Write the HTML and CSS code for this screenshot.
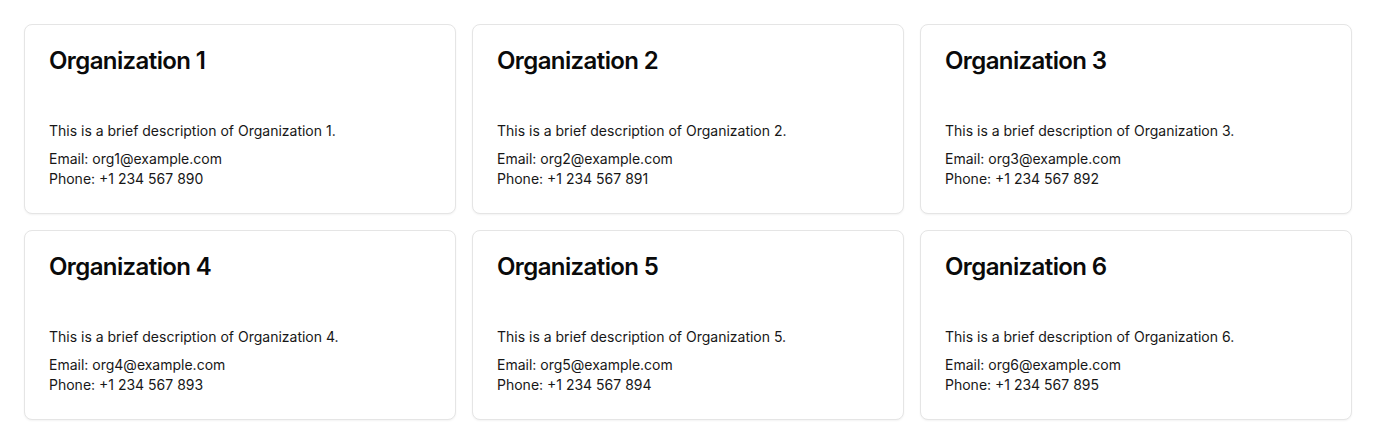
FILE: index.html
```html
<!DOCTYPE html>
<html>
<head>
<meta charset="utf-8">
<link rel="stylesheet" href="styles.css">
</head>
<body>
<div class="grid">
  <div class="card">
    <div class="card-header"><h3 class="card-title">Organization 1</h3></div>
    <div class="card-content">
      <p class="desc">This is a brief description of Organization 1.</p>
      <p class="info">Email: org1@example.com</p>
      <p class="info">Phone: +1 234 567 890</p>
    </div>
  </div>
  <div class="card">
    <div class="card-header"><h3 class="card-title">Organization 2</h3></div>
    <div class="card-content">
      <p class="desc">This is a brief description of Organization 2.</p>
      <p class="info">Email: org2@example.com</p>
      <p class="info">Phone: +1 234 567 891</p>
    </div>
  </div>
  <div class="card">
    <div class="card-header"><h3 class="card-title">Organization 3</h3></div>
    <div class="card-content">
      <p class="desc">This is a brief description of Organization 3.</p>
      <p class="info">Email: org3@example.com</p>
      <p class="info">Phone: +1 234 567 892</p>
    </div>
  </div>
  <div class="card">
    <div class="card-header"><h3 class="card-title">Organization 4</h3></div>
    <div class="card-content">
      <p class="desc">This is a brief description of Organization 4.</p>
      <p class="info">Email: org4@example.com</p>
      <p class="info">Phone: +1 234 567 893</p>
    </div>
  </div>
  <div class="card">
    <div class="card-header"><h3 class="card-title">Organization 5</h3></div>
    <div class="card-content">
      <p class="desc">This is a brief description of Organization 5.</p>
      <p class="info">Email: org5@example.com</p>
      <p class="info">Phone: +1 234 567 894</p>
    </div>
  </div>
  <div class="card">
    <div class="card-header"><h3 class="card-title">Organization 6</h3></div>
    <div class="card-content">
      <p class="desc">This is a brief description of Organization 6.</p>
      <p class="info">Email: org6@example.com</p>
      <p class="info">Phone: +1 234 567 895</p>
    </div>
  </div>
</div>
</body>
</html>
```
FILE: styles.css
```css
* { box-sizing: border-box; }
html, body { margin: 0; padding: 0; background: #ffffff; }
body {
  font-family: Inter, "Noto Sans", sans-serif;
  color: #0a0a0a;
}
.grid {
  display: grid;
  grid-template-columns: repeat(3, 1fr);
  gap: 16px;
  padding: 24px;
}
.card {
  border: 1px solid #e5e5e5;
  border-radius: 8px;
  background: #fff;
  box-shadow: 0 1px 2px rgba(0,0,0,0.05);
}
.card-header { padding: 24px; }
.card-title {
  margin: 0;
  font-size: 24px;
  line-height: 24px;
  font-weight: 600;
  letter-spacing: -0.6px;
}
.card-content { padding: 24px; }
.desc {
  margin: 0 0 8px;
  font-size: 14px;
  line-height: 20px;
  color: #171717;
}
.info {
  margin: 0;
  font-size: 14px;
  line-height: 20px;
  color: #171717;
}
```
